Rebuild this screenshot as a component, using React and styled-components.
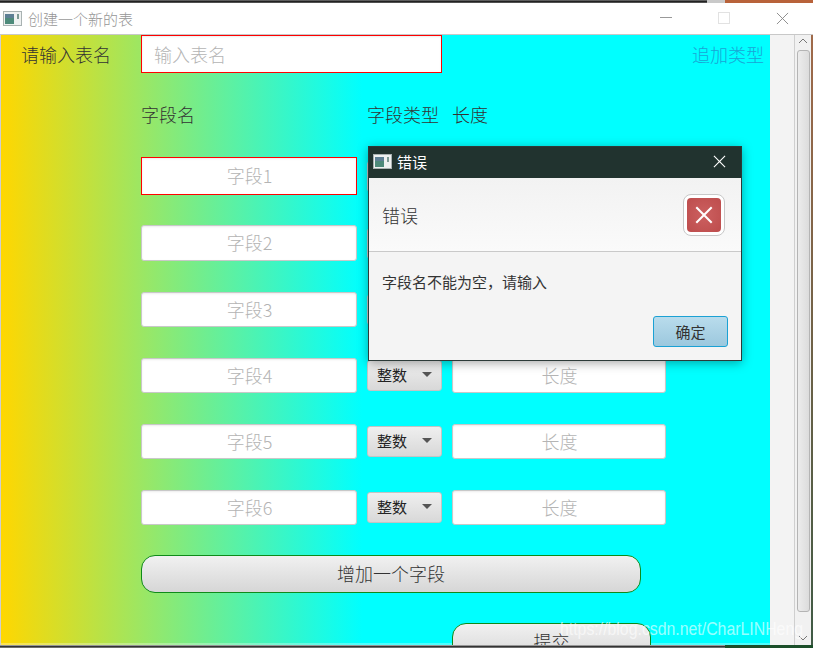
import React from 'react';
import styled, { createGlobalStyle } from 'styled-components';

const Global = createGlobalStyle`
  html, body {
    margin: 0;
    padding: 0;
    background: #fff;
  }
  body {
    width: 813px;
    height: 648px;
    overflow: hidden;
    font-family: "Noto Sans CJK SC", "Liberation Sans", sans-serif;
    font-weight: 300;
    color: #333;
  }
`;

const Win = styled.div`
  position: relative;
  width: 813px;
  height: 648px;
  overflow: hidden;
  display: flex;
  flex-direction: column;
  background: #fff;
`;

const TopStrip = styled.div`
  height: 3px;
  flex: none;
  background:
    linear-gradient(90deg, transparent 707px, #c9c9c9 707px, #c9c9c9 725px, #b8623a 725px),
    linear-gradient(#8a8a8a, #222 40%, #222 70%, #888);
`;

const BottomStrip = styled.div`
  height: 3px;
  flex: none;
  background:
    linear-gradient(90deg, transparent 725px, #1c4f2a 725px),
    linear-gradient(#c8c8c8, #333 50%, #8a8a8a);
`;

const TitleBar = styled.div`
  height: 32px;
  flex: none;
  display: flex;
  align-items: center;
  padding: 0 2px 1px 3px;
  box-sizing: border-box;
  background: #fff;
  border-bottom: 1px solid #c8c8c8;
`;

const TitleText = styled.span`
  margin-left: 6px;
  font-size: 15px;
  color: #969696;
  flex: 1;
`;

const WinBtns = styled.div`
  display: flex;
  align-items: center;
`;

const WinBtn = styled.div`
  width: 58px;
  height: 20px;
  display: flex;
  align-items: center;
  justify-content: center;
`;

const Body = styled.div`
  flex: 1;
  display: flex;
  min-height: 0;
`;

const Pane = styled.div`
  width: 770px;
  flex: none;
  box-sizing: border-box;
  border-left: 1px solid #cfcfcf;
  background: linear-gradient(90deg, #ffd700 0%, #00ffff 47%, #00ffff 100%);
  box-shadow: inset 0 -2px 0 rgba(255, 255, 255, 0.3);
  display: flex;
  flex-direction: column;
  padding-left: 140px;
  position: relative;
  overflow: hidden;
`;

const Side = styled.div`
  width: 24px;
  background: #f3f3f3;
  flex: none;
`;

const Scroll = styled.div`
  width: 17px;
  flex: none;
  background: #f1f1f1;
  border-left: 1px solid #cfcfcf;
  box-sizing: border-box;
  display: flex;
  flex-direction: column;
  align-items: center;
  padding-top: 3px;
`;

const Thumb = styled.div`
  width: 13px;
  height: 562px;
  margin: 5px 0 22px;
  flex: none;
  box-sizing: border-box;
  border: 1px solid #b4b4b4;
  border-radius: 3px;
  background: linear-gradient(90deg, #ececec, #dcdcdc);
`;

const Edge = styled.div`
  width: 2px;
  flex: none;
  background: linear-gradient(#a06a4a, #3f5a45);
`;

const NameRow = styled.div`
  display: flex;
  align-items: center;
  justify-content: space-between;
  height: 38px;
  padding-right: 6px;
`;

const NameLabel = styled.label`
  position: absolute;
  left: 20px;
  font-size: 18px;
  line-height: 38px;
  color: #333;
`;

const Input = styled.div`
  box-sizing: border-box;
  width: ${p => p.$w}px;
  height: ${p => p.$h}px;
  flex: none;
  background: #fff;
  border: 1px solid ${p => (p.$bad ? '#f00' : '#c8c8c8')};
  border-radius: ${p => (p.$bad ? 0 : 3)}px;
  box-shadow: inset 0 1px 2px rgba(0, 0, 0, 0.08);
  display: flex;
  align-items: center;
  justify-content: ${p => (p.$left ? 'flex-start' : 'center')};
  padding: 0 0 ${p => (p.$left ? 0 : 2)}px ${p => (p.$left ? 12 : 1)}px;
  font-size: 18px;
  color: #b4b4b4;
`;

const AddType = styled.span`
  font-size: 18px;
  color: #1aa5d5;
`;

const Head = styled.div`
  display: flex;
  margin-top: 28px;
  font-size: 18px;
  line-height: 26px;
  color: #333;
`;

const HeadCell = styled.span`
  width: ${p => p.$w}px;
  flex: none;
`;

const Rows = styled.div`
  display: flex;
  flex-direction: column;
  margin-top: 30px;
`;

const Row = styled.div`
  display: flex;
  align-items: center;
  height: ${p => p.$h}px;
  margin-bottom: ${p => p.$mb}px;
`;

const Select = styled.div`
  box-sizing: border-box;
  width: 75px;
  height: 31px;
  margin: 0 10px;
  flex: none;
  border: 1px solid #c4c4c4;
  border-radius: 3px;
  background: linear-gradient(#efefef, #d8d8d8);
  display: flex;
  align-items: center;
  justify-content: space-between;
  padding: 0 9px 2px;
  font-size: 15px;
  font-weight: 400;
  color: #222;
`;

const Caret = styled.i`
  width: 0;
  height: 0;
  border-left: 5px solid transparent;
  border-right: 5px solid transparent;
  border-top: 5px solid #555;
`;

const Big = styled.button`
  box-sizing: border-box;
  display: block;
  width: ${p => p.$w}px;
  height: 38px;
  margin-left: ${p => p.$ml}px;
  margin-top: ${p => p.$mt}px;
  flex: none;
  border: 1px solid #0f8a1a;
  border-radius: 14px;
  background: linear-gradient(#f1f1f1, #d6d6d6);
  font: inherit;
  font-size: 18px;
  color: #333;
  padding: 0 0 2px;
`;

const Mark = styled.div`
  position: absolute;
  left: 560px;
  top: 619px;
  font-family: "Liberation Sans", sans-serif;
  font-size: 18px;
  color: rgba(255, 255, 255, 0.62);
  white-space: nowrap;
  pointer-events: none;
  transform: scaleX(0.88);
  transform-origin: left center;
`;

const Dialog = styled.div`
  position: absolute;
  left: 368px;
  top: 146px;
  width: 374px;
  height: 215px;
  box-sizing: border-box;
  border: 1px solid #2c3a38;
  background: #f4f4f4;
  box-shadow: 0 2px 10px rgba(0, 0, 0, 0.35);
  display: flex;
  flex-direction: column;
`;

const DlgBar = styled.div`
  height: 31px;
  flex: none;
  box-sizing: border-box;
  background: #21332f;
  color: #fff;
  display: flex;
  align-items: center;
  padding: 0 15px 2px 4px;
  font-size: 15px;
  font-weight: 400;
`;

const DlgTitle = styled.span`
  margin-left: 5px;
  flex: 1;
`;

const DlgHead = styled.div`
  height: 74px;
  flex: none;
  box-sizing: border-box;
  background: linear-gradient(#f2f2f2, #fafafa);
  border-bottom: 1px solid #c9c9c9;
  display: flex;
  align-items: center;
  justify-content: space-between;
  padding: 0 16px 0 13px;
  font-size: 18px;
  color: #333;
`;

const ErrBox = styled.div`
  width: 42px;
  height: 42px;
  box-sizing: border-box;
  border: 1px solid #c8c8c8;
  border-radius: 8px;
  background: #fff;
  padding: 3px;
`;

const ErrFace = styled.div`
  width: 100%;
  height: 100%;
  border-radius: 4px;
  background: radial-gradient(circle, #cc6060, #bd4c4c);
  display: flex;
  align-items: center;
  justify-content: center;
`;

const DlgMsg = styled.div`
  flex: 1;
  padding: 20px 13px 0;
  font-size: 15px;
  line-height: 20px;
  font-weight: 400;
  color: #333;
`;

const DlgFoot = styled.div`
  display: flex;
  justify-content: flex-end;
  padding: 0 13px 13px;
`;

const Ok = styled.button`
  box-sizing: border-box;
  width: 75px;
  height: 31px;
  border: 1px solid #1ba1d4;
  border-radius: 3px;
  background: linear-gradient(#b9dcec, #9cc8de);
  font: inherit;
  font-size: 15px;
  font-weight: 400;
  color: #333;
  padding: 0;
`;

const AppIcon = () => (
  <svg width="19" height="15" viewBox="0 0 19 15">
    <rect x="0.5" y="0.5" width="18" height="14" fill="#eef1f1" stroke="#a9b2b2" />
    <rect x="2" y="3" width="9" height="10" fill="#4d8a7a" />
    <rect x="2" y="3" width="9" height="4" fill="#5d7f94" />
    <rect x="14" y="3" width="2" height="5" fill="#7d9a94" />
  </svg>
);

const Cross = ({ size, color, weight }) => (
  <svg width={size} height={size} viewBox="0 0 14 14">
    <path d="M1 1L13 13M13 1L1 13" stroke={color} strokeWidth={weight} fill="none" />
  </svg>
);

const rows = [
  { n: '字段1', bad: true, h: 38, mb: 30 },
  { n: '字段2', h: 36, mb: 31 },
  { n: '字段3', h: 35, mb: 31 },
  { n: '字段4', h: 35, mb: 31 },
  { n: '字段5', h: 35, mb: 31 },
  { n: '字段6', h: 35, mb: 0 },
];

export default function App() {
  return (
    <Win>
      <Global />
      <TopStrip />
      <TitleBar>
        <AppIcon />
        <TitleText>创建一个新的表</TitleText>
        <WinBtns>
          <WinBtn>
            <svg width="12" height="2"><rect width="12" height="1" fill="#999" /></svg>
          </WinBtn>
          <WinBtn>
            <svg width="12" height="12"><rect x="0.5" y="0.5" width="11" height="11" fill="none" stroke="#e2e2e2" /></svg>
          </WinBtn>
          <WinBtn>
            <Cross size={13} color="#888" weight={1} />
          </WinBtn>
        </WinBtns>
      </TitleBar>
      <Body>
        <Pane>
          <NameRow>
            <NameLabel>请输入表名</NameLabel>
            <Input $w={301} $h={38} $bad $left>输入表名</Input>
            <AddType>追加类型</AddType>
          </NameRow>
          <Head>
            <HeadCell $w={226}>字段名</HeadCell>
            <HeadCell $w={85}>字段类型</HeadCell>
            <HeadCell $w={60}>长度</HeadCell>
          </Head>
          <Rows>
            {rows.map(r => (
              <Row key={r.n} $h={r.h} $mb={r.mb}>
                <Input $w={216} $h={r.h} $bad={r.bad}>{r.n}</Input>
                <Select>整数<Caret /></Select>
                <Input $w={214} $h={35}>长度</Input>
              </Row>
            ))}
          </Rows>
          <Big $w={500} $ml={0} $mt={30}>增加一个字段</Big>
          <Big $w={199} $ml={311} $mt={30}>提交</Big>
        </Pane>
        <Side />
        <Scroll>
          <svg width="10" height="7" viewBox="0 0 10 7">
            <path d="M1 5L5 1L9 5" stroke="#777" fill="none" />
          </svg>
          <Thumb />
          <svg width="10" height="7" viewBox="0 0 10 7">
            <path d="M1 2L5 6L9 2" stroke="#777" fill="none" />
          </svg>
        </Scroll>
        <Edge />
      </Body>
      <BottomStrip />
      <Dialog>
        <DlgBar>
          <AppIcon />
          <DlgTitle>错误</DlgTitle>
          <Cross size={13} color="#fff" weight={1.2} />
        </DlgBar>
        <DlgHead>
          错误
          <ErrBox>
            <ErrFace>
              <Cross size={18} color="#fff" weight={1.6} />
            </ErrFace>
          </ErrBox>
        </DlgHead>
        <DlgMsg>字段名不能为空，请输入</DlgMsg>
        <DlgFoot>
          <Ok>确定</Ok>
        </DlgFoot>
      </Dialog>
      <Mark>https://blog.csdn.net/CharLINHeng</Mark>
    </Win>
  );
}
